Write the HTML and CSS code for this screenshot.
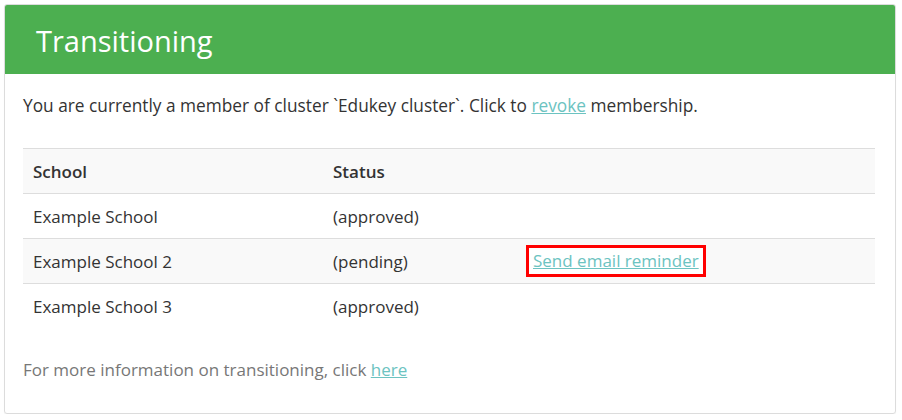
FILE: index.html
```html
<!DOCTYPE html>
<html>
<head>
<meta charset="utf-8">
<link rel="stylesheet" href="styles.css">
</head>
<body>
<div class="panel">
  <div class="panel-heading">Transitioning</div>
  <div class="panel-body">
    <p class="intro">You are currently a member of cluster `Edukey cluster`. Click to <a href="#">revoke</a> membership.</p>
    <table class="schools">
      <thead>
        <tr><th class="c1">School</th><th class="c2">Status</th><th class="c3"></th></tr>
      </thead>
      <tbody>
        <tr><td>Example School</td><td>(approved)</td><td></td></tr>
        <tr class="alt"><td>Example School 2</td><td>(pending)</td><td><a href="#" class="remind">Send email reminder</a></td></tr>
        <tr><td>Example School 3</td><td>(approved)</td><td></td></tr>
      </tbody>
    </table>
    <p class="more">For more information on transitioning, click <a href="#">here</a></p>
  </div>
</div>
</body>
</html>
```
FILE: styles.css
```css
html, body {
  margin: 0;
  padding: 0;
  background: #fff;
}
body {
  font-family: "Open Sans", "DejaVu Sans", sans-serif;
  font-size: 17px;
  color: #333;
}
.panel {
  margin: 4px 6px 0 4px;
  height: 410px;
  box-sizing: border-box;
  border: 1px solid #dcdcdc;
  border-radius: 3px;
  box-shadow: 0 1px 1px rgba(0,0,0,0.06);
  display: flex;
  flex-direction: column;
}
.panel-heading {
  background: #4caf50;
  color: #fff;
  font-size: 29px;
  height: 69px;
  line-height: 72px;
  padding-left: 31px;
  border-top-left-radius: 2px;
  border-top-right-radius: 2px;
}
.panel-body {
  padding: 0 18px;
}
a {
  color: #6cc3c1;
  text-decoration: underline;
}
.intro {
  margin: 19px 0 0 0;
  line-height: 26px;
  font-size: 17.3px;
}
.schools {
  margin-top: 29px;
  width: 852px;
  border-collapse: collapse;
  border-top: 1px solid #ddd;
}
.schools th {
  text-align: left;
  font-weight: 600;
  background: #f9f9f9;
}
.schools th, .schools td {
  padding: 0 10px;
  height: 44px;
  border-bottom: 1px solid #ddd;
  vertical-align: middle;
}
.schools tbody tr:last-child td {
  border-bottom: none;
}
.c1 { width: 280px; }
.c2 { width: 180px; }
.schools tr.alt td {
  background: #f9f9f9;
}
.remind {
  display: inline-block;
  background: #fff;
  border: 3px solid #ff0000;
  padding: 0 4px;
  margin-left: -7px;
  line-height: 26px;
}
.more {
  color: #777;
  margin: 29px 0 0 0;
  line-height: 26px;
}
```
